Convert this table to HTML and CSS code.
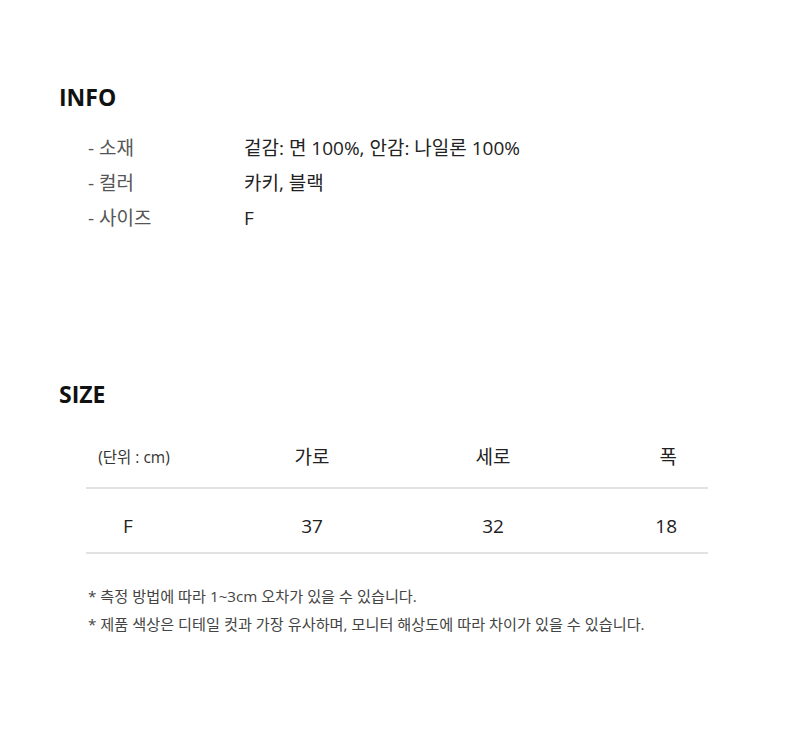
FILE: index.html
```html
<!DOCTYPE html>
<html lang="ko">
<head>
<meta charset="utf-8">
<link rel="stylesheet" href="styles.css">
</head>
<body>
<div class="page">
  <section class="info">
    <h2 class="heading">INFO</h2>
    <ul class="info-list">
      <li class="info-row"><span class="info-label">- 소재</span><span class="info-value">겉감: 면 100%, 안감: 나일론 100%</span></li>
      <li class="info-row"><span class="info-label">- 컬러</span><span class="info-value">카키, 블랙</span></li>
      <li class="info-row"><span class="info-label">- 사이즈</span><span class="info-value">F</span></li>
    </ul>
  </section>
  <section class="size">
    <h2 class="heading">SIZE</h2>
    <div class="size-table">
      <div class="tr thead">
        <div class="td c1 unit">(단위 : cm)</div>
        <div class="td c2">가로</div>
        <div class="td c3">세로</div>
        <div class="td c4">폭</div>
      </div>
      <div class="tr tbody">
        <div class="td c1 size-name">F</div>
        <div class="td c2">37</div>
        <div class="td c3">32</div>
        <div class="td c4">18</div>
      </div>
    </div>
    <ul class="notes">
      <li>* 측정 방법에 따라 1~3cm 오차가 있을 수 있습니다.</li>
      <li>* 제품 색상은 디테일 컷과 가장 유사하며, 모니터 해상도에 따라 차이가 있을 수 있습니다.</li>
    </ul>
  </section>
</div>
</body>
</html>
```
FILE: styles.css
```css
* { box-sizing: border-box; }
html, body { margin: 0; padding: 0; background: #fff; }
body {
  font-family: "Open Sans", "Noto Sans CJK KR", sans-serif;
  color: #222;
}
.page {
  padding: 79px 0 0 59px;
}
.heading {
  margin: 0;
  font-size: 23px;
  line-height: 36px;
  font-weight: 700;
  color: #111;
}
.info-list {
  list-style: none;
  margin: 16px 0 0;
  padding: 0 0 0 29px;
}
.info-row {
  display: flex;
  font-size: 19px;
  line-height: 35px;
}
.info-label {
  width: 156px;
  color: #555;
}
.info-value {
  color: #222;
}
.size {
  margin-top: 140px;
}
.size-table {
  margin: 15px 0 0 27px;
  width: 622px;
}
.tr {
  display: grid;
  grid-template-columns: 96px 260px 102px 164px;
  align-items: center;
  border-bottom: 2px solid #e2e2e2;
  font-size: 19px;
  color: #222;
}
.thead { height: 62px; padding-bottom: 2px; }
.tbody { height: 65px; padding-top: 10px; }
.td { text-align: center; }
.size-name { padding-right: 12px; }
.c4 { text-align: right; padding-right: 31px; }
.unit { font-size: 15.5px; color: #333; }
.notes {
  list-style: none;
  margin: 28px 0 0 29px;
  padding: 0;
  font-size: 15.2px;
  line-height: 28px;
  color: #444;
}
```
